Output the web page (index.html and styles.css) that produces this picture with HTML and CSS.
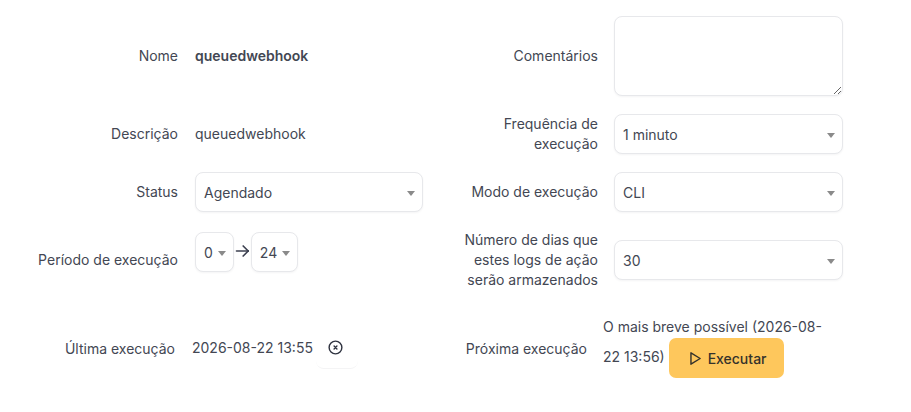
FILE: index.html
```html
<!DOCTYPE html>
<html lang="pt-BR">
<head>
    <meta charset="UTF-8">
    <title>queuedwebhook</title>
    <link rel="stylesheet" href="styles.css">
</head>
<body>

    <form class="task-form">

        <!-- Row 1 -->
        <div class="field">
            <div class="field-label">Nome</div>
            <div class="field-value"><strong>queuedwebhook</strong></div>
        </div>
        <div class="field field-right">
            <div class="field-label">Comentários</div>
            <textarea class="comments"></textarea>
        </div>

        <!-- Row 2 -->
        <div class="field">
            <div class="field-label">Descrição</div>
            <div class="field-value">queuedwebhook</div>
        </div>
        <div class="field field-right">
            <div class="field-label">Frequência de execução</div>
            <div class="select"><span>1 minuto</span><i class="caret"></i></div>
        </div>

        <!-- Row 3 -->
        <div class="field">
            <div class="field-label">Status</div>
            <div class="select"><span>Agendado</span><i class="caret"></i></div>
        </div>
        <div class="field field-right">
            <div class="field-label">Modo de execução</div>
            <div class="select"><span>CLI</span><i class="caret"></i></div>
        </div>

        <!-- Row 4 -->
        <div class="field">
            <div class="field-label">Período de execução</div>
            <div class="period">
                <div class="select select-small"><span>0</span><i class="caret"></i></div>
                <svg class="period-arrow" viewBox="2 0 20.4 24" width="17" height="20" fill="none" stroke="currentColor" stroke-width="2" stroke-linecap="round" stroke-linejoin="round">
                    <path d="M5 12h14"/>
                    <path d="M13 6l6 6"/>
                    <path d="M13 18l6-6"/>
                </svg>
                <div class="select select-small"><span>24</span><i class="caret"></i></div>
            </div>
        </div>
        <div class="field field-right">
            <div class="field-label">Número de dias que estes logs de ação serão armazenados</div>
            <div class="select"><span>30</span><i class="caret"></i></div>
        </div>

        <!-- Row 5 -->
        <div class="field field-last">
            <div class="field-label">Última execução</div>
            <div class="last-run">
                <span>2026-08-22 13:55</span>
                <button type="button" class="clear-btn">
                    <svg viewBox="0 0 24 24" width="17" height="17" fill="none" stroke="currentColor" stroke-width="2" stroke-linecap="round" stroke-linejoin="round">
                        <circle cx="12" cy="12" r="9"/>
                        <path d="M10 10l4 4m0-4l-4 4"/>
                    </svg>
                </button>
            </div>
        </div>
        <div class="field field-right field-last">
            <div class="field-label">Próxima execução</div>
            <div class="next-run">
                O mais breve possível (2026-08-22 13:56)
                <button type="button" class="run-btn">
                    <svg viewBox="0 0 24 24" width="17" height="17" fill="none" stroke="currentColor" stroke-width="2" stroke-linecap="round" stroke-linejoin="round">
                        <path d="M7 4v16l13-8z"/>
                    </svg>
                    Executar
                </button>
            </div>
        </div>

    </form>

</body>
</html>
```

FILE: styles.css
```css
body {
    margin: 0;
    background: #fff;
    color: #434753;
    font-family: Inter, "Liberation Sans", sans-serif;
    font-size: 14px;
    line-height: 20px;
}

.task-form {
    display: grid;
    grid-template-columns: 423px 420px;
    row-gap: 18px;
    padding-top: 16px;
}

.field {
    display: flex;
    align-items: center;
}

.field-label {
    flex: none;
    width: 178px;
    margin-right: 17px;
    text-align: right;
}

.field-right .field-label {
    box-sizing: border-box;
    width: 175px;
    margin-right: 16px;
    padding-left: 30px;
}

.field-value {
    flex: 1;
}

.field-value strong {
    font-weight: 600;
}

.comments,
.select {
    box-sizing: border-box;
    border: 1px solid #e7e8eb;
    border-radius: 8px;
    background: #fff;
    box-shadow: 0 1px 2px rgba(30, 40, 60, 0.05);
}

.comments {
    display: block;
    flex: 1;
    height: 80px;
    margin: 0;
    padding: 8px;
    outline: none;
}

.select {
    flex: 1;
    display: flex;
    align-items: center;
    justify-content: space-between;
    height: 40px;
    padding: 1px 7px 0 8px;
}

.caret {
    width: 0;
    height: 0;
    border-left: 4.5px solid transparent;
    border-right: 4.5px solid transparent;
    border-top: 5px solid #8a8a8a;
    margin-top: 2px;
}

.period {
    display: flex;
    align-items: flex-start;
    flex: 1;
    margin-top: -16px;
}

.select-small {
    flex: none;
    gap: 5px;
    padding-right: 7px;
}

.period-arrow {
    flex: none;
    margin-top: 9px;
    color: #3c4050;
}

.field-last {
    margin-top: 4px;
}

.field-last .field-label {
    width: 175px;
    margin-right: 17px;
}

.field-right.field-last .field-label {
    width: 164px;
    margin-right: 17px;
    padding-left: 0;
}

.last-run {
    display: flex;
    align-items: center;
    margin-top: -2px;
}

.clear-btn {
    display: flex;
    align-items: center;
    justify-content: center;
    width: 42px;
    height: 40px;
    margin-left: 3px;
    margin-top: 2px;
    padding: 0 3px 1px 0;
    border: 0;
    border-bottom: 1px solid #f4f4f5;
    border-radius: 8px;
    background: none;
    color: #2f3340;
}

.next-run {
    flex: 1;
    margin-left: -1px;
    padding: 0 14px 12px 0;
    line-height: 30px;
}

.run-btn {
    display: inline-flex;
    align-items: center;
    gap: 5px;
    height: 40px;
    margin: -5px 0;
    padding: 0 17px 0 17px;
    border: 0;
    border-radius: 7px;
    background: #fec75c;
    color: #35322b;
    font-family: inherit;
    font-size: 14px;
    font-weight: 500;
    vertical-align: middle;
}
```
